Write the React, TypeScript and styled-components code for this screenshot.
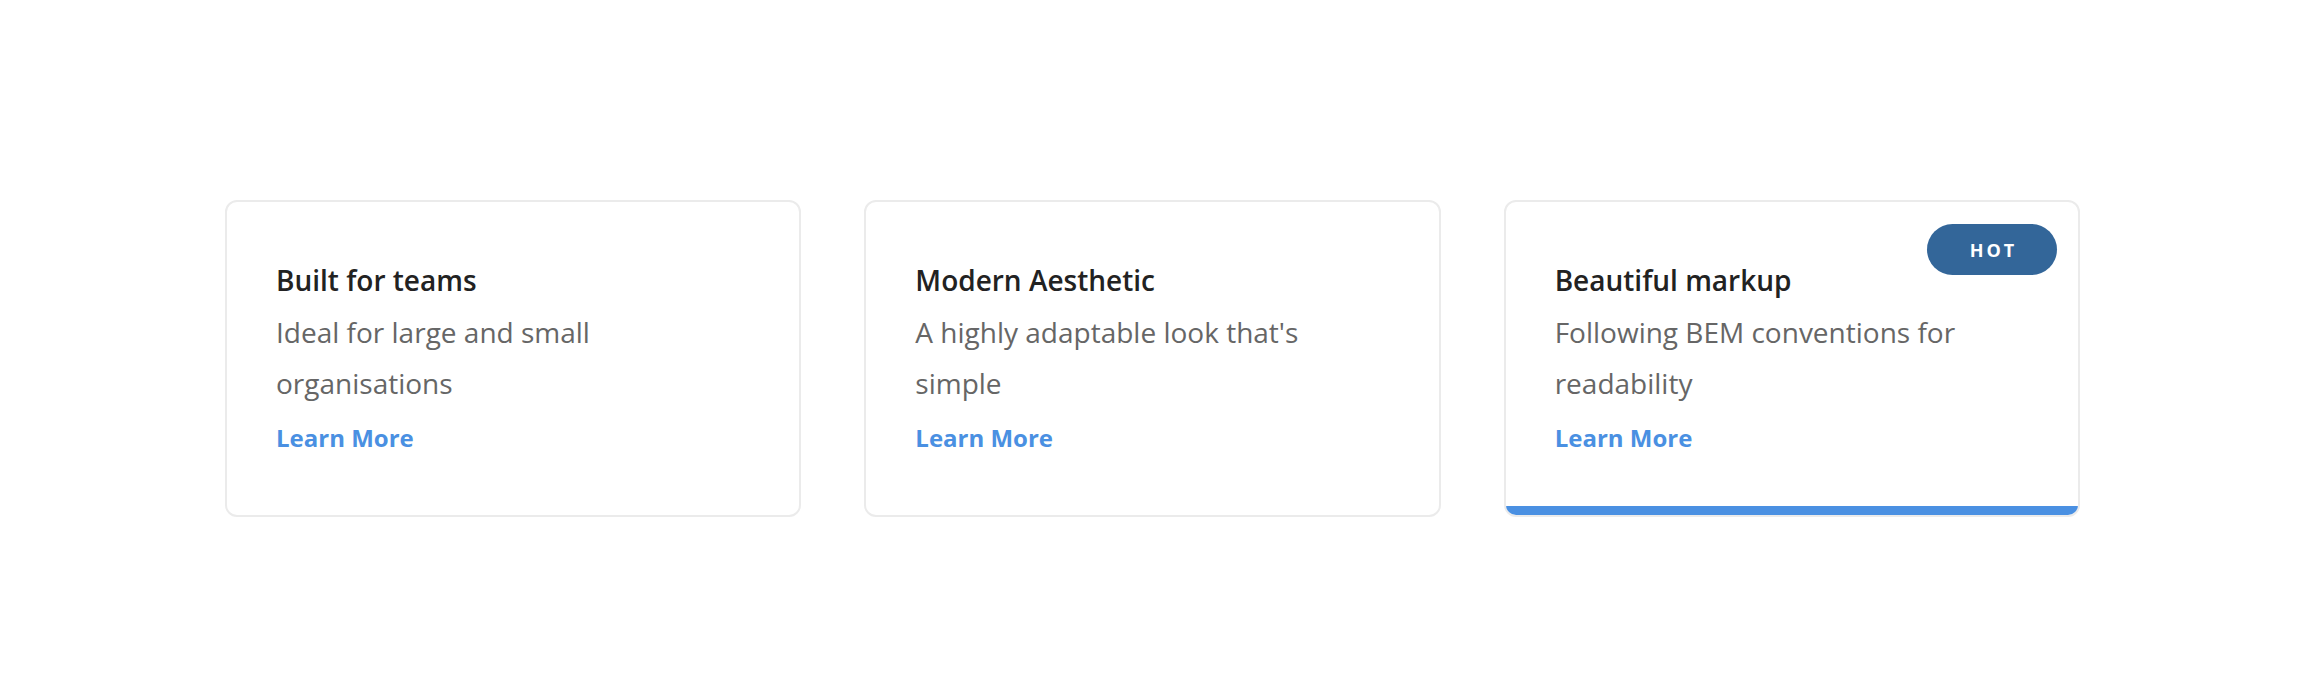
import React from "react";
import styled, { createGlobalStyle } from "styled-components";

const GlobalStyle = createGlobalStyle`
  html, body {
    margin: 0;
    padding: 0;
    background: #ffffff;
  }
  body {
    font-family: "Open Sans", "Noto Sans", sans-serif;
  }
`;

interface Feature {
  title: string;
  text: string;
  hot?: boolean;
}

const features: Feature[] = [
  { title: "Built for teams", text: "Ideal for large and small organisations" },
  { title: "Modern Aesthetic", text: "A highly adaptable look that's simple" },
  {
    title: "Beautiful markup",
    text: "Following BEM conventions for readability",
    hot: true,
  },
];

const App = () => {
  return (
    <>
      <GlobalStyle />
      <Page>
        <CardRow>
          {features.map((f) => (
            <Card key={f.title} $highlight={f.hot}>
              {f.hot && <Badge>HOT</Badge>}
              <Title>{f.title}</Title>
              <Description>{f.text}</Description>
              <LearnMore href="#">Learn More</LearnMore>
            </Card>
          ))}
        </CardRow>
      </Page>
    </>
  );
};

export default App;

const Page = styled.div`
  height: 680px;
  padding-top: 200px;
  box-sizing: border-box;
`;

const CardRow = styled.div`
  display: flex;
  gap: 63px;
  width: 1858px;
  margin: 0 auto;
  padding-right: 3px;
  box-sizing: border-box;
`;

const Card = styled.div<{ $highlight?: boolean }>`
  position: relative;
  flex: 1;
  height: 317px;
  box-sizing: border-box;
  padding: 60px 60px 0 49px;
  border: 2px solid #ebebeb;
  border-radius: 12px;
  background: #fff;
  overflow: hidden;

  &::after {
    content: "";
    display: ${(p) => (p.$highlight ? "block" : "none")};
    position: absolute;
    left: 0;
    right: 0;
    bottom: 0;
    height: 9px;
    background: #4a90e2;
  }
`;

const Badge = styled.span`
  position: absolute;
  top: 22px;
  right: 21px;
  width: 130px;
  height: 51px;
  border-radius: 26px;
  background: #336699;
  color: #fff;
  font-size: 18px;
  font-weight: 700;
  letter-spacing: 3px;
  display: flex;
  align-items: center;
  justify-content: center;
  padding-left: 3px;
  box-sizing: border-box;
`;

const Title = styled.h3`
  margin: 0;
  font-size: 28px;
  font-weight: 600;
  color: #222;
  line-height: 37px;
`;

const Description = styled.p`
  margin: 8px 0 0 0;
  font-size: 28px;
  font-weight: 400;
  color: #666;
  line-height: 51px;
`;

const LearnMore = styled.a`
  display: inline-block;
  margin-top: 10px;
  font-size: 24px;
  font-weight: 700;
  line-height: 37px;
  color: #4a90e2;
  text-decoration: none;
`;
